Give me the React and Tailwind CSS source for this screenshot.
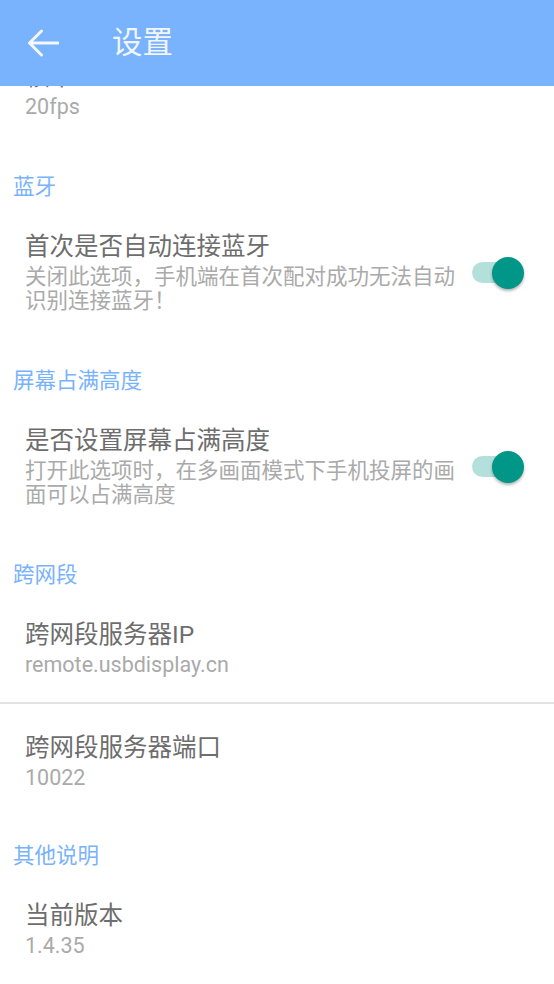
import React from "react";

const font = { fontFamily: "Roboto, 'Noto Sans CJK SC', 'Noto Sans', sans-serif" };

function Toggle() {
  return (
    <div className="relative ml-auto mr-[30px] h-[32px] w-[52px] flex items-center shrink-0">
      <div className="h-[21px] w-[46px] rounded-full bg-[#b4e0dc]" />
      <div className="absolute right-0 top-0 h-[32px] w-[32px] rounded-full bg-[#009688] shadow-[0_2px_3px_rgba(0,0,0,0.3)]" />
    </div>
  );
}

function Section({ children }) {
  return (
    <div className="pt-[28px] pl-[13px] text-[21.5px] leading-[24px] text-[#79b2fd]">{children}</div>
  );
}

function Item({ title, sub, toggle, pt = "pt-[33px]", pb = "pb-[28px]" }) {
  return (
    <div className={`flex items-center pl-[25px] ${pt} ${pb}`}>
      <div className="w-[440px]">
        <div className="text-[24.5px] leading-[30px] text-[#6d6d6d]">{title}</div>
        <div className="mt-[3px] text-[21.5px] leading-[24px] text-[#aaaaaa]">{sub}</div>
      </div>
      {toggle && <Toggle />}
    </div>
  );
}

export default function App() {
  return (
    <div className="relative w-[554px] h-[984px] overflow-hidden bg-white" style={font}>
      <div className="absolute top-0 left-0 right-0 z-10 h-[86px] bg-[#79b2fd] flex items-center">
        <svg className="ml-[27px]" width="32" height="28" viewBox="0 0 32 28" fill="none">
          <path d="M2.5 14 H31 M14.5 2 L2.5 14 L14.5 26" stroke="#f4f7fc" strokeWidth="3" strokeLinecap="round" strokeLinejoin="round" />
        </svg>
        <div className="ml-[53px] text-[30.5px] leading-[36px] text-[#f2f6fc]">设置</div>
      </div>

      <div className="pt-[29px]">
        <Item title="帧率" sub="20fps" />
        <Section>蓝牙</Section>
        <Item
          title="首次是否自动连接蓝牙"
          sub="关闭此选项，手机端在首次配对成功无法自动识别连接蓝牙！"
          toggle
        />
        <Section>屏幕占满高度</Section>
        <Item
          title="是否设置屏幕占满高度"
          sub="打开此选项时，在多画面模式下手机投屏的画面可以占满高度"
          toggle
        />
        <Section>跨网段</Section>
        <Item title="跨网段服务器IP" sub="remote.usbdisplay.cn" pb="pb-[25px]" />
        <div className="h-[2px] bg-[#e2e2e2]" />
        <Item title="跨网段服务器端口" sub="10022" pt="pt-[29px]" pb="pb-[26px]" />
        <Section>其他说明</Section>
        <Item title="当前版本" sub="1.4.35" />
      </div>
    </div>
  );
}
